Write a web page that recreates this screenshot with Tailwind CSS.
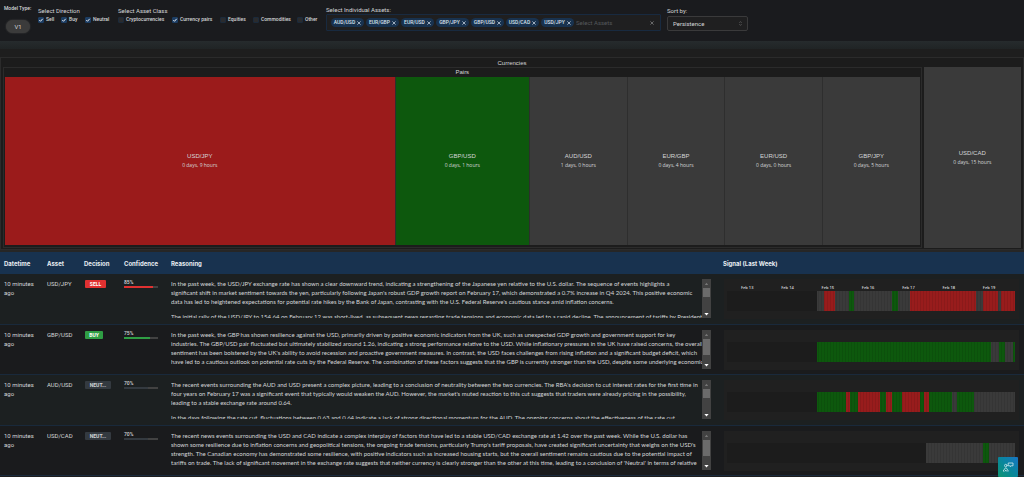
<!DOCTYPE html>
<html lang="en">
<head>
<meta charset="utf-8">
<title>FX Signals</title>
<script src="https://cdn.jsdelivr.net/npm/@tailwindcss/browser@4"></script>
</head>
<body class="bg-[#1e1e1e] font-['Roboto','Liberation_Sans',sans-serif] text-[6px] leading-[9px] text-[#d4d6d8]">
<div class="min-h-screen overflow-x-hidden">

<header class="flex h-[41px] items-start bg-[#1a1b1e] pl-1">
  <div class="w-[34px] shrink-0 pt-1">
    <div class="whitespace-nowrap text-[5px] font-medium leading-[9px]">Model Type:</div>
    <button class="mt-[7px] ml-[2px] flex h-[13px] w-6 items-center justify-center rounded-full bg-[#3b3b3b] text-[6px] shadow-[0_0_2px_#444]">V1</button>
  </div>
  <fieldset class="mt-[6px] w-20 shrink-0">
    <legend>Select Direction</legend>
    <div class="flex text-[5px]" data-checks="Sell:23:1,Buy:24:1,Neutral:30:1"></div>
  </fieldset>
  <fieldset class="mt-[6px] w-[208px] shrink-0">
    <legend>Select Asset Class</legend>
    <div class="flex text-[5px]" data-checks="Cryptocurrencies:54:0,Currency pairs:48:1,Equities:33:0,Commodities:44:0,Other:24:0"></div>
  </fieldset>
  <div class="w-[335px] shrink-0 pt-[5px]">
    <label for="assets">Select Individual Assets:</label>
    <div class="flex h-[17px] items-center gap-[2px] rounded-[1px] border border-[#182a40] bg-[#1f1f20] pl-1 pr-1 text-[5px]">
      <div id="tags" class="flex gap-[2px]"></div>
      <input id="assets" placeholder="Select Assets" class="w-0 grow bg-transparent text-[6px] leading-[9px] outline-none placeholder:text-[#55585c]">
      <button aria-label="Clear all" class="flex w-2 justify-center text-[#888]"><svg class="size-[4px]" viewBox="0 0 4 4" stroke="currentColor" stroke-width=".7"><path d="M.4.4l3.2 3.2M3.6.4.4 3.6"/></svg></button>
    </div>
  </div>
  <div class="ml-[6px] w-[81px] shrink-0 pt-[6px]">
    <label for="sort" class="block">Sort by:</label>
    <div class="relative mt-[1px]">
      <select id="sort" class="block h-[15px] w-full appearance-none rounded-[2px] border border-[#3a3a3b] bg-[#1f1f20] pl-[5px] text-[6px]"><option>Persistence</option></select>
      <svg class="pointer-events-none absolute right-[6px] top-[5px] h-[5px] w-[3px]" viewBox="0 0 3 5" fill="none" stroke="#777" stroke-width=".6"><path d="M.4 1.8 1.5.6l1.1 1.2M.4 3.2l1.1 1.2 1.1-1.2"/></svg>
    </div>
  </div>
</header>
<div class="h-2 bg-linear-to-b from-[#262b2d] to-[#202425]"></div>
<div class="h-2"></div>

<section class="font-['Liberation_Sans',sans-serif]">
  <div class="border border-[#2b2b2b] bg-[#1c1c1c] px-[2px] pb-[1px]">
    <div class="h-[9px] text-center leading-[11px]">Currencies</div>
    <div class="flex h-[181px] gap-[2px]">
      <div class="flex min-w-0 flex-[920] flex-col border border-[#2b2b2b] px-[1px] pb-[2px]">
        <div class="h-[9px] text-center leading-[9px]">Pairs</div>
        <div id="pairs" class="grid grow grid-cols-[391fr_134fr_97fr_97fr_97fr_97fr] gap-[1px] bg-[#2e2e2e]"></div>
      </div>
      <div class="flex min-w-0 flex-[98] flex-col items-center justify-center bg-[#3a3a3a]">
        <div class="leading-[9px]">USD/CAD</div>
        <div class="font-['Open_Sans',sans-serif] text-[5px] font-medium leading-[9px]">0 days, 15 hours</div>
      </div>
    </div>
  </div>
  <div class="h-[2px] bg-[#262626]"></div>
</section>

<table class="w-full table-fixed border-collapse">
  <colgroup><col class="w-[43px]"><col class="w-[37px]"><col class="w-[40px]"><col class="w-[47px]"><col><col class="w-[304px]"></colgroup>
  <thead>
    <tr class="h-[22px] bg-[#18324f] text-left font-['Inter',sans-serif] font-bold text-[#e9edf2]">
      <th class="pl-1">Datetime</th><th class="pl-1">Asset</th><th class="pl-1">Decision</th><th class="pl-1">Confidence</th><th class="pl-1">Reasoning</th><th class="pl-[3px]">Signal (Last Week)</th>
    </tr>
  </thead>
  <tbody id="rows"></tbody>
</table>

<button aria-label="Open assistant" class="fixed bottom-0 right-[6px] flex size-5 items-center justify-center rounded-[1px] bg-linear-to-tr from-[#12946f] to-[#1a74c4]">
  <svg class="size-[12px]" viewBox="0 0 12 12" fill="none" stroke="#cfe9ee" stroke-width=".8" stroke-linejoin="round" stroke-linecap="round"><circle cx="3.800" cy="4.600" r="1.300"/><path d="M1.500 10.200V9Q2.800 8.800 2.800 7.400Q3.800 6.500 4.800 7.400Q4.800 8.800 6 9V10.200M3 10.200 3.800 9 4.600 10.200M6.600 2h4.400v2.800H9.200L8.400 5.700V4.800H6.600Z"/></svg>
</button>
</div>

<script>
const $ = id => document.getElementById(id);

document.querySelectorAll('[data-checks]').forEach(box => {
  box.innerHTML = box.dataset.checks.split(',').map(item => {
    const [name, width, on] = item.split(':');
    return `<label class="flex shrink-0 items-center gap-[2px] whitespace-nowrap font-medium" style="width:${width}px">
      <span class="relative flex size-[6px]">
        <input type="checkbox" ${+on ? 'checked' : ''} class="peer size-[6px] appearance-none rounded-[1px] border border-[#1b2a3b] bg-[#2a2b2d] checked:border-[#1c3d63] checked:bg-[#1c3d63]">
        <svg class="pointer-events-none absolute inset-0 hidden size-[6px] peer-checked:block" viewBox="0 0 6 6" fill="none" stroke="#fff" stroke-width=".9"><path d="M1.300 3.100 2.500 4.300 4.700 1.800"/></svg>
      </span>${name}</label>`;
  }).join('');
});

$('tags').innerHTML = ['AUD/USD','EUR/GBP','EUR/USD','GBP/JPY','GBP/USD','USD/CAD','USD/JPY'].map(t =>
  `<span class="flex h-[9px] w-[33px] items-center justify-center gap-[2px] rounded-full bg-[#18324f] font-medium text-[#d9e2ee]">${t}<button aria-label="Remove ${t}"><svg class="size-[4px]" viewBox="0 0 4 4" stroke="currentColor" stroke-width=".7"><path d="M.4.4l3.2 3.2M3.6.4.4 3.6"/></svg></button></span>`).join('');

$('pairs').innerHTML = [['USD/JPY','0 days, 9 hours','bg-[#9b1b1b]'],['GBP/USD','0 days, 1 hours','bg-[#0d580d]'],['AUD/USD','1 days, 0 hours','bg-[#3a3a3a]'],['EUR/GBP','0 days, 4 hours','bg-[#3a3a3a]'],['EUR/USD','0 days, 0 hours','bg-[#3a3a3a]'],['GBP/JPY','0 days, 5 hours','bg-[#3a3a3a]']].map(([n, d, c]) =>
  `<div class="flex flex-col items-center justify-center ${c}"><div class="leading-[9px]">${n}</div><div class="font-['Open_Sans',sans-serif] text-[5px] font-medium leading-[9px]">${d}</div></div>`).join('');

const fills = { x: 'bg-[#1c1c1c]', n: 'bg-[#3a3a3a]', r: 'bg-[#981c1c]', g: 'bg-[#0d580d]' };
const kinds = {
  SELL: { badge: 'bg-[#e03131] w-[21px] text-white', bar: 'bg-[#e03131]' },
  BUY: { badge: 'bg-[#2f9e44] w-[18px] text-white', bar: 'bg-[#2f9e44]' },
  'NEUT...': { badge: 'bg-[#343a40] w-[26px]', bar: 'bg-[#343a40]' }
};
const data = [
  { asset: 'USD/JPY', kind: 'SELL', conf: 85, thumb: 'h-[9px]', pad: 'pb-[6px]', days: true,
    sig: 'x269 n21 r34 n41 g15 n115 g19 n36 r196 n20 r45 n9 r43',
    text: [['In the past week, the USD/JPY exchange rate has shown a clear downward trend, indicating a strengthening of the Japanese yen relative to the U.S. dollar. The sequence of events highlights a',
      "significant shift in market sentiment towards the yen, particularly following Japan's robust GDP growth report on February 17, which demonstrated a 0.7% increase in Q4 2024. This positive economic",
      "data has led to heightened expectations for potential rate hikes by the Bank of Japan, contrasting with the U.S. Federal Reserve's cautious stance amid inflation concerns."],
      ['The initial rally of the USD/JPY to 154.64 on February 12 was short-lived, as subsequent news regarding trade tensions and economic data led to a rapid decline. The announcement of tariffs by President']] },
  { asset: 'GBP/USD', kind: 'BUY', conf: 75, thumb: 'h-4', pad: 'pb-[5px]',
    sig: 'x269 g521 n25 g17 n24 g7',
    text: [['In the past week, the GBP has shown resilience against the USD, primarily driven by positive economic indicators from the UK, such as unexpected GDP growth and government support for key',
      'industries. The GBP/USD pair fluctuated but ultimately stabilized around 1.26, indicating a strong performance relative to the USD. While inflationary pressures in the UK have raised concerns, the overall',
      "sentiment has been bolstered by the UK's ability to avoid recession and proactive government measures. In contrast, the USD faces challenges from rising inflation and a significant budget deficit, which",
      'have led to a cautious outlook on potential rate cuts by the Federal Reserve. The combination of these factors suggests that the GBP is currently stronger than the USD, despite some underlying economic',
      'concerns.']] },
  { asset: 'AUD/USD', kind: 'NEUT...', conf: 70, thumb: 'h-[9px]', pad: 'pb-[6px]',
    sig: 'x269 g89 r11 g25 r65 g19 r17 g30 r54 g11 r15 g70 n15 g51 n122',
    text: [["The recent events surrounding the AUD and USD present a complex picture, leading to a conclusion of neutrality between the two currencies. The RBA's decision to cut interest rates for the first time in",
      "four years on February 17 was a significant event that typically would weaken the AUD. However, the market's muted reaction to this cut suggests that traders were already pricing in the possibility,",
      'leading to a stable exchange rate around 0.64.'],
      ['In the days following the rate cut, fluctuations between 0.63 and 0.64 indicate a lack of strong directional momentum for the AUD. The ongoing concerns about the effectiveness of the rate cut']] },
  { asset: 'USD/CAD', kind: 'NEUT...', conf: 70, thumb: 'h-4', pad: 'pb-[5px]',
    sig: 'x596 n170 g19 n78',
    text: [['The recent news events surrounding the USD and CAD indicate a complex interplay of factors that have led to a stable USD/CAD exchange rate at 1.42 over the past week. While the U.S. dollar has',
      "shown some resilience due to inflation concerns and geopolitical tensions, the ongoing trade tensions, particularly Trump's tariff proposals, have created significant uncertainty that weighs on the USD's",
      'strength. The Canadian economy has demonstrated some resilience, with positive indicators such as increased housing starts, but the overall sentiment remains cautious due to the potential impact of',
      "tariffs on trade. The lack of significant movement in the exchange rate suggests that neither currency is clearly stronger than the other at this time, leading to a conclusion of 'Neutral' in terms of relative",
      'strength.']] }
];
const days = ['Feb 13','Feb 14','Feb 15','Feb 16','Feb 17','Feb 18','Feb 19'];

$('rows').innerHTML = data.map(d => {
  const k = kinds[d.kind];
  const paras = d.text.map(p => `<p>${p.join('<br>')}</p>`).join('');
  const segs = d.sig.split(' ').map(s => `<div class="${fills[s[0]]}" style="width:${s.slice(1) / 8.63}%"></div>`).join('');
  return `<tr class="border-b border-[#19293b] bg-[#1a1b1d] align-top odd:bg-[#1c2021]">
    <td class="pl-1 pt-[5px]">10 minutes<br>ago</td>
    <td class="pl-1 pt-[5px]">${d.asset}</td>
    <td class="pl-[5px] pt-[6px]"><div class="h-2 overflow-hidden rounded-[1px] text-center text-[5px] font-bold leading-[8px] ${k.badge}">${d.kind}</div></td>
    <td class="pl-1 pt-[5px]"><div class="text-[5px] font-medium leading-[7px]">${d.conf}%</div>
      <div class="h-[2px] w-[34px] bg-[#424242]"><div class="h-[2px] ${k.bar}" style="width:${d.conf}%"></div></div></td>
    <td class="pl-1 pr-[9px] pt-[5px] ${d.pad}"><div class="flex h-[39px] justify-between overflow-hidden">
      <div class="w-0 grow space-y-[6px] whitespace-nowrap font-['Lato',sans-serif]">${paras}</div>
      <div class="flex w-[9px] shrink-0 flex-col items-center bg-[#424242]">
        <svg class="h-[9px] w-[5px]" viewBox="0 0 5 9"><path d="M.8 6h3.400L2.500 3.800z" fill="#777"/></svg>
        <div class="w-[7px] bg-[#6b6b6b] ${d.thumb}"></div>
        <svg class="mt-auto h-[9px] w-[5px]" viewBox="0 0 5 9"><path d="M.4 4h4.200L2.500 6.600z" fill="#fff"/></svg>
      </div></div></td>
    <td class="pl-1 pr-[5px] pt-[5px]"><div class="h-10 bg-[#202020] pl-[3px] pr-1 pt-[4px]">
      <div class="grid h-2 w-[98%] grid-cols-7 text-center font-['Open_Sans',sans-serif] text-[4px] font-semibold leading-[9px]">${d.days ? days.map(x => `<span>${x}</span>`).join('') : ''}</div>
      <div class="relative flex h-5">${segs}<div class="absolute inset-y-0 right-0 ${d.asset === 'USD/CAD' ? 'w-[31%]' : 'w-[69%]'} bg-[repeating-linear-gradient(90deg,#0000_0_2px,#00000016_2px_3px)]"></div></div>
    </div></td>
  </tr>`;
}).join('');
</script>
</body>
</html>
